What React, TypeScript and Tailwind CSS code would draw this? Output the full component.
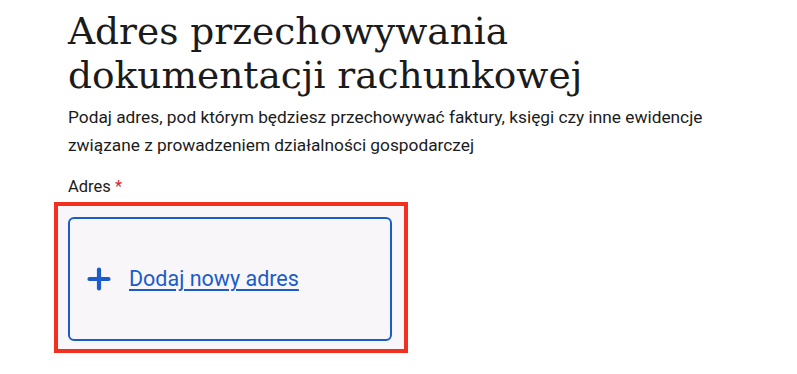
import React from 'react';

function PlusIcon() {
  return (
    <svg width="24" height="24" viewBox="0 0 24 24" className="shrink-0">
      <path d="M12 2.5v19M2.5 12h19" stroke="#1a5ccb" strokeWidth="4.2" strokeLinecap="round" fill="none" />
    </svg>
  );
}

export default function App() {
  return (
    <div className="min-h-screen bg-white pl-[68px] pt-[9px]">
      <h1 className="text-[37.5px] leading-[44px] text-[#1b1b1b] font-normal" style={{ fontFamily: '"DejaVu Serif", serif' }}>
        Adres przechowywania
        <br />
        dokumentacji rachunkowej
      </h1>

      <p className="mt-[6px] text-[17.3px] leading-[28px] text-[#1b1b1b]" style={{ fontFamily: 'Roboto, sans-serif' }}>
        Podaj adres, pod którym będziesz przechowywać faktury, księgi czy inne ewidencje
        <br />
        związane z prowadzeniem działalności gospodarczej
      </p>

      <div className="mt-[18px] text-[16.5px] leading-[20px] text-[#1b1b1b]" style={{ fontFamily: 'Roboto, sans-serif' }}>
        Adres <span className="text-[#d9262e]">*</span>
      </div>

      <div className="-ml-[14px] mt-[5px] w-[354px] border-4 border-[#f2301f] bg-[#f8f6f9] pl-[10px] pr-[12px] pt-[11px] pb-[8px]">
        <button className="flex h-[124px] w-[324px] items-center gap-[18px] rounded-md border-2 border-[#1a5ccb] bg-[#f8f6f9] pl-[17px]">
          <PlusIcon />
          <span className="text-[21.5px] leading-[28px] text-[#1a5ccb] underline underline-offset-[3px] decoration-[1.5px]" style={{ fontFamily: 'Roboto, sans-serif' }}>
            Dodaj nowy adres
          </span>
        </button>
      </div>
    </div>
  );
}
